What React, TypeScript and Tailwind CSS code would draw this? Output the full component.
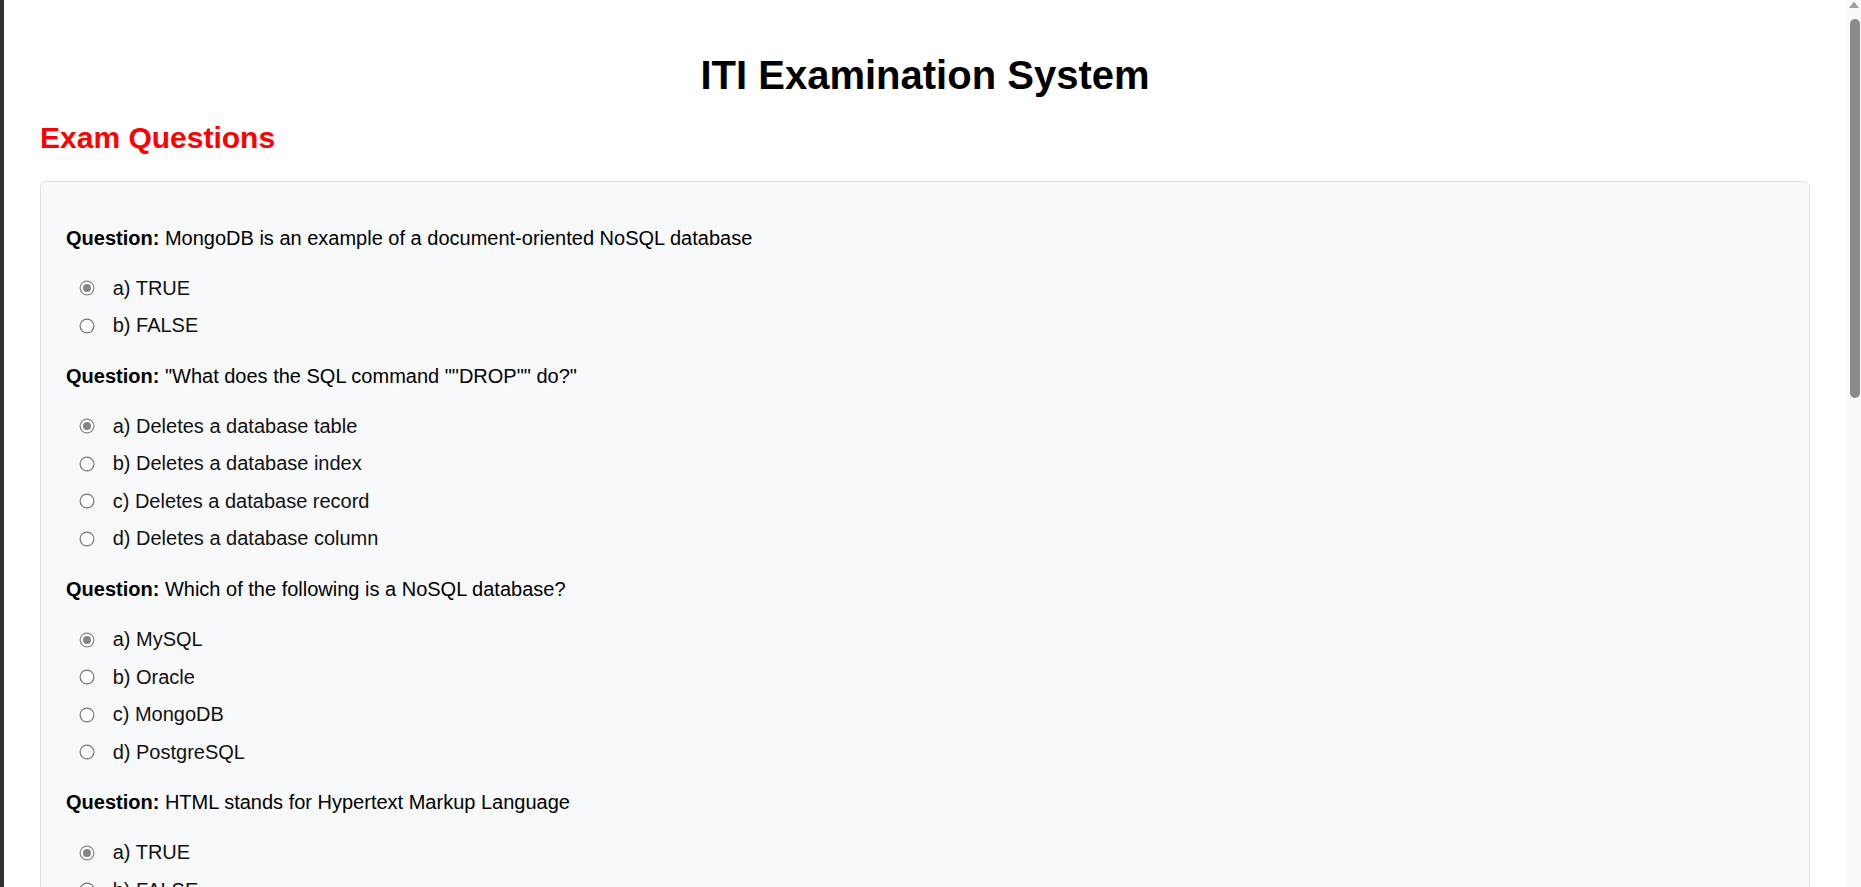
import React from "react";

type Q = { text: string; options: string[]; checked: number };

const questions: Q[] = [
  {
    text: "MongoDB is an example of a document-oriented NoSQL database",
    options: ["a) TRUE", "b) FALSE"],
    checked: 0,
  },
  {
    text: '"What does the SQL command ""DROP"" do?"',
    options: [
      "a) Deletes a database table",
      "b) Deletes a database index",
      "c) Deletes a database record",
      "d) Deletes a database column",
    ],
    checked: 0,
  },
  {
    text: "Which of the following is a NoSQL database?",
    options: ["a) MySQL", "b) Oracle", "c) MongoDB", "d) PostgreSQL"],
    checked: 0,
  },
  {
    text: "HTML stands for Hypertext Markup Language",
    options: ["a) TRUE", "b) FALSE"],
    checked: 0,
  },
  {
    text: "CSS is used to style web pages",
    options: ["a) TRUE", "b) FALSE"],
    checked: 0,
  },
];

function Radio({ checked }: { checked: boolean }) {
  return (
    <svg width="16" height="16" viewBox="0 0 16 16" className="shrink-0">
      <circle cx="8" cy="8" r="6.9" fill="#ffffff" stroke={checked ? "#858585" : "#767676"} strokeWidth="1.2" />
      {checked && <circle cx="8" cy="8" r="4" fill="#858585" />}
    </svg>
  );
}

export default function App() {
  return (
    <div
      className="flex h-screen w-screen overflow-hidden bg-white text-black"
      style={{ fontFamily: '"Liberation Sans", Arial, sans-serif' }}
    >
      <div className="w-[4px] shrink-0 bg-[#323232]" />
      <main className="flex-1 overflow-hidden px-[36px]">
        <h1 className="mt-[51.5px] text-center text-[40px] font-bold leading-[46px]">
          ITI Examination System
        </h1>
        <h2 className="mt-[23px] text-[30px] font-bold leading-[34.5px] text-[#ff0000]">
          Exam Questions
        </h2>
        <section className="mt-[26px] rounded-[6px] border border-[#dee2e6] bg-[#f8f9fa] px-[25px] pt-[44.6px] pb-[40px]">
          <div className="flex flex-col gap-[27.5px]">
            {questions.map((q, qi) => (
              <div key={qi} className="flex flex-col">
                <p className="text-[20px] leading-[23px]">
                  <strong className="font-bold">Question:</strong> {q.text}
                </p>
                <div className="mt-[27.2px] flex flex-col gap-[14.5px]">
                  {q.options.map((o, oi) => (
                    <label key={oi} className="ml-[12.7px] flex items-center gap-[18px] text-[20px] leading-[23px] text-[#111]">
                      <Radio checked={oi === q.checked} />
                      <span>{o}</span>
                    </label>
                  ))}
                </div>
              </div>
            ))}
          </div>
        </section>
      </main>
      <div className="flex w-[15px] shrink-0 flex-col bg-[#fafafa]">
        <div className="flex h-[19px] items-start justify-end pr-[1px] pt-[1px]">
          <svg width="12" height="8" viewBox="0 0 12 8">
            <polygon points="6,0.5 11,7 1,7" fill="#a0a0a0" />
          </svg>
        </div>
        <div className="ml-[4px] h-[379px] w-[10px] rounded-full bg-[#8b8b8b]" />
      </div>
    </div>
  );
}
